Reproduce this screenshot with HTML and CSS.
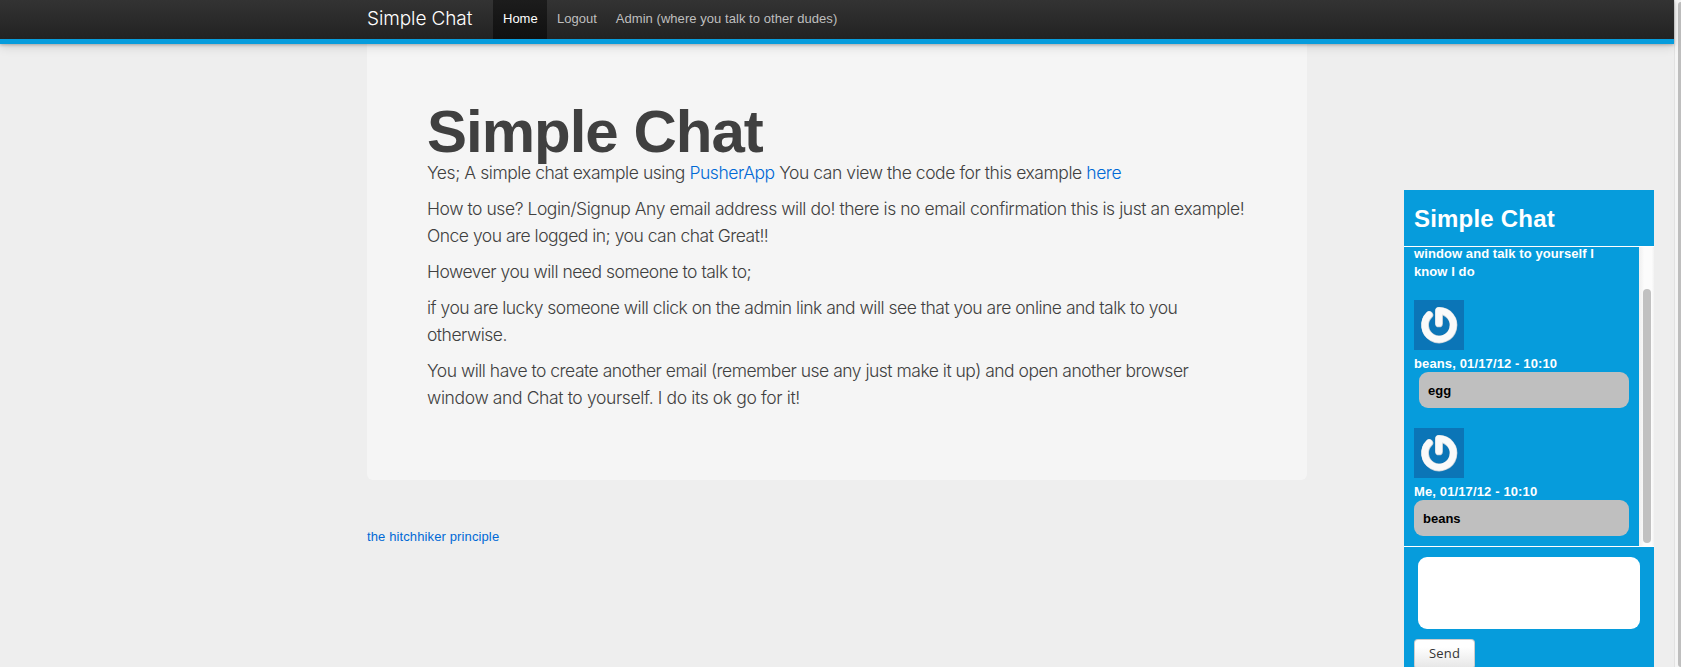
FILE: index.html
```html
<!DOCTYPE html>
<html lang="en">
<head>
<meta charset="utf-8">
<title>Simple Chat</title>
<link rel="stylesheet" href="styles.css">
</head>
<body>
<svg class="defs" width="0" height="0">
  <defs>
    <symbol id="power" viewBox="0 0 50 50">
      <rect width="50" height="50" fill="#0b75b7"/>
      <g fill="none" stroke-linecap="round" stroke-linejoin="round">
        <path d="M15.3 15.1A14.2 14.2 0 1 0 25 11V23.4" stroke="#c3cfd8" stroke-width="7.8"/>
        <path d="M15 14.8A14.3 14.3 0 1 0 24.8 10.7V23.2" stroke="#fafafa" stroke-width="6.8"/>
      </g>
    </symbol>
  </defs>
</svg>
<header class="topbar">
  <nav class="container nav">
    <a class="brand">Simple Chat</a>
    <a class="item active">Home</a>
    <a class="item">Logout</a>
    <a class="item admin">Admin (where you talk to other dudes)</a>
  </nav>
</header>
<main class="container">
  <section class="hero">
    <h1>Simple Chat</h1>
    <p><span class="wide">Yes; A simple chat example using <a>PusherApp</a> You can view the code for this example <a>here</a></span></p>
    <p><span class="wide">How to use? Login/Signup Any email address will do! there is no email confirmation this is just an example!</span><br>Once you are logged in; you can chat Great!!</p>
    <p>However you will need someone to talk to;</p>
    <p>if you are lucky someone will click on the admin link and will see that you are online and talk to you<br>otherwise.</p>
    <p>You will have to create another email (remember use any just make it up) and open another browser<br><span class="wider">window and Chat to yourself. I do its ok go for it!</span></p>
  </section>
  <footer><a>the hitchhiker principle</a></footer>
</main>
<aside class="chat">
  <h2>Simple Chat</h2>
  <div class="body">
    <div class="messages">
      <div class="intro">window and talk to yourself I<br>know I do</div>
      <div class="msg">
        <svg class="avatar"><use href="#power"/></svg>
        <div class="who">beans, 01/17/12 - 10:10</div>
        <div class="bubble other">egg</div>
      </div>
      <div class="msg">
        <svg class="avatar"><use href="#power"/></svg>
        <div class="who">Me, 01/17/12 - 10:10</div>
        <div class="bubble">beans</div>
      </div>
    </div>
    <div class="track"><div class="thumb"></div></div>
  </div>
  <div class="compose">
    <div class="input"></div>
    <button class="send">Send</button>
  </div>
</aside>
<div class="page-track"><div class="page-thumb"></div></div>
</body>
</html>
```
FILE: styles.css
```css
* { box-sizing: border-box; }
html, body { height: 667px; overflow: hidden; }
body {
  margin: 0;
  background: #eee;
  color: #404040;
  font: 13px/18px "Liberation Sans", Arial, sans-serif;
}
.defs { display: block; position: absolute; }
a { color: #0069d6; text-decoration: none; }
.container { width: 940px; margin-left: 367px; }

.topbar {
  position: relative;
  z-index: 2;
  width: 1674px;
  height: 44px;
  background: linear-gradient(#333, #222) padding-box;
  border-bottom: 5px solid #069cdc;
  box-shadow: 0 1px 3px rgba(0,0,0,.25), 0 3px 10px rgba(0,0,0,.12);
}
.nav { display: flex; height: 39px; line-height: 38px; white-space: nowrap; }
.nav .brand {
  width: 126px;
  color: #fff;
  font: 300 19px/37px Inter, sans-serif;
  letter-spacing: -.1px;
}
.nav .item { padding: 0 10px; color: #bfbfbf; }
.nav .active { width: 54px; color: #fff; background: linear-gradient(#1c1c1c, #101010); }
.nav .admin { padding-left: 9px; letter-spacing: .05px; }

.hero {
  height: 441px;
  margin-top: -5px;
  padding: 60px;
  background: #f5f5f5;
  border-radius: 0 0 6px 6px;
}
.hero h1 {
  height: 60px;
  margin: 0;
  font-size: 60px;
  line-height: 65px;
  letter-spacing: -1px;
  white-space: nowrap;
}
.hero p {
  margin: 0 0 9px;
  font: 300 17.5px/27px Inter, sans-serif;
  letter-spacing: -.5px;
  white-space: nowrap;
}
.hero .wide { letter-spacing: -.44px; }
.hero .wider { letter-spacing: -.37px; }
footer { margin-top: 48px; letter-spacing: .12px; }

.chat {
  position: absolute;
  left: 1404px;
  top: 190px;
  width: 250px;
  height: 477px;
  background: #069cdc;
  color: #fff;
  font-weight: bold;
  overflow: hidden;
}
.chat h2 {
  height: 56px;
  margin: 0;
  padding-left: 10px;
  font-size: 24px;
  line-height: 57px;
  letter-spacing: .2px;
}
.body {
  display: flex;
  height: 301px;
  border-top: 1px solid #fff;
  border-bottom: 1px solid #fff;
}
.messages { width: 235px; padding: 0 10px; overflow: hidden; }
.intro { margin-top: -2px; letter-spacing: .08px; }
.msg { margin-top: 19px; height: 109px; }
.avatar { display: block; width: 50px; height: 50px; }
.who { margin-top: 5px; height: 17px; letter-spacing: .13px; }
.bubble {
  height: 36px;
  padding-left: 9px;
  line-height: 37px;
  border-radius: 9px;
  background: #bfbfbf;
  color: #000;
}
.bubble.other { margin-left: 5px; }
.track {
  width: 15px;
  padding: 42px 3px 3px 4px;
  background: linear-gradient(90deg, #efefef, #fcfcfc 35%, #fcfcfc 85%, #f2f2f2);
}
.thumb { height: 254px; border-radius: 4px; background: #c1c1c1; }
.compose { padding: 10px; }
.input { width: 222px; height: 72px; margin-left: 4px; border-radius: 9px; background: #fff; }
.send {
  display: block;
  width: 61px;
  height: 30px;
  margin-top: 10px;
  padding: 0 0 2px;
  border: 1px solid #ccc;
  border-bottom-color: #bbb;
  border-radius: 4px;
  background: linear-gradient(#fff 25%, #e6e6e6);
  color: #333;
  font: 13px/26px "Open Sans", sans-serif;
  letter-spacing: .2px;
}
.page-track {
  position: absolute;
  left: 1674px;
  top: 0;
  width: 7px;
  height: 667px;
  padding: 2px 0 0 3px;
  background: #f5f5f5;
  border-left: 1px solid #e2e2e2;
}
.page-thumb { height: 665px; background: #bebebe; border-radius: 4px 0 0 4px; }
```
